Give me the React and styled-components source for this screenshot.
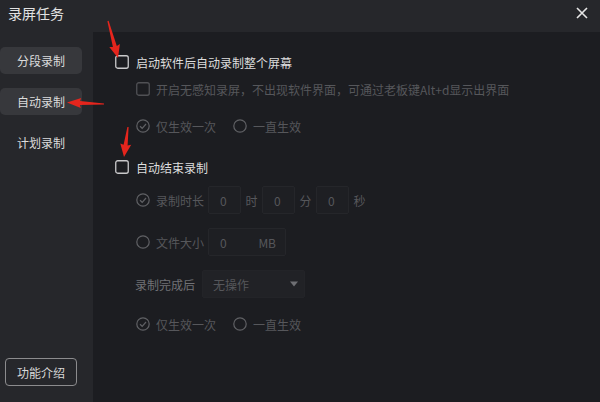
import React from "react";
import styled, { createGlobalStyle } from "styled-components";

const Global = createGlobalStyle`
  html, body { margin: 0; padding: 0; background: #26272b; }
  body { font-family: "Noto Sans CJK SC", "Noto Sans", sans-serif; }
  * { box-sizing: border-box; }
`;

const Window = styled.div`
  position: relative;
  width: 600px;
  height: 402px;
  background: #26272b;
  display: flex;
  flex-direction: column;
  overflow: hidden;
`;

const TitleBar = styled.div`
  height: 32px;
  flex: none;
  display: flex;
  align-items: center;
  justify-content: space-between;
  padding: 0 8px 6px 8px;
  color: #e2e2e2;
  font-size: 14px;
`;

const CloseBtn = styled.div`
  width: 14px;
  height: 14px;
  margin-right: 3px;
  display: flex;
  align-items: center;
  justify-content: center;
`;

const Body = styled.div`
  flex: 1;
  display: flex;
  min-height: 0;
`;

const Sidebar = styled.div`
  width: 93px;
  flex: none;
  display: flex;
  flex-direction: column;
  justify-content: space-between;
  padding: 15px 0 16px 0;
`;

const NavList = styled.div`
  display: flex;
  flex-direction: column;
  gap: 14px;
`;

const NavItem = styled.div`
  width: 82px;
  height: 27px;
  border-radius: 5px;
  background: ${(p) => (p.$active ? "#37383c" : "transparent")};
  color: #dcdcdc;
  font-size: 12px;
  display: flex;
  align-items: center;
  justify-content: center;
`;

const IntroButton = styled.div`
  margin-left: 5px;
  width: 72px;
  height: 28px;
  border: 1px solid #8c8c8e;
  border-radius: 4px;
  color: #d8d8d8;
  font-size: 12px;
  display: flex;
  align-items: center;
  justify-content: center;
`;

const Main = styled.div`
  flex: 1;
  background: #1c1d21;
  padding: 17px 0 0 22px;
  display: flex;
  flex-direction: column;
`;

const Row = styled.div`
  height: 26px;
  margin-top: ${(p) => p.$mt || 0}px;
  padding-left: ${(p) => (p.$indent ? 21 : 0)}px;
  display: flex;
  align-items: center;
  flex: none;
`;

const Label = styled.span`
  font-size: 12px;
  color: ${(p) => (p.$dim ? "#56575b" : p.$mid ? "#707175" : "#dedede")};
  white-space: nowrap;
  margin-left: ${(p) => p.$ml || 0}px;
`;

const Unit = styled.span`
  width: 21px;
  font-size: 12px;
  color: #56575b;
  text-align: center;
`;

const Field = styled.div`
  width: ${(p) => p.$w}px;
  height: 28px;
  margin-left: ${(p) => p.$ml || 0}px;
  background: #1e1f23;
  border: 1px solid #25262a;
  border-radius: 2px;
  display: flex;
  align-items: center;
  justify-content: space-between;
  padding: 0 9px 0 11px;
  font-size: 12px;
  color: #56575b;
`;

const Select = styled(Field)`
  background: #212226;
  border-color: #232428;
  padding: 0 6px 0 10px;
`;

const Option = styled.div`
  display: flex;
  align-items: center;
  margin-left: ${(p) => p.$ml || 0}px;
`;

const Overlay = styled.svg`
  position: absolute;
  left: 0;
  top: 0;
  pointer-events: none;
`;

const Box = ({ dim }) => (
  <svg width="14" height="14" viewBox="0 0 14 14">
    <rect x="0.75" y="0.75" width="12.5" height="12.5" rx="2" fill="none" stroke={dim ? "#505155" : "#c9c9cb"} strokeWidth="1.3" />
  </svg>
);

const CheckCircle = () => (
  <svg width="14" height="14" viewBox="0 0 14 14">
    <circle cx="7" cy="7" r="6.2" fill="none" stroke="#606165" strokeWidth="1.2" />
    <path d="M4 7.2 L6.2 9.3 L10 5" fill="none" stroke="#606165" strokeWidth="1.2" />
  </svg>
);

const Circle = () => (
  <svg width="14" height="14" viewBox="0 0 14 14">
    <circle cx="7" cy="7" r="6.2" fill="none" stroke="#606165" strokeWidth="1.2" />
  </svg>
);

function arrowPoints(tx, ty, px, py, headLen = 11, headW = 5.5, shaftStart = 0.6, shaftEnd = 2) {
  const dx = px - tx, dy = py - ty;
  const len = Math.hypot(dx, dy);
  const ux = dx / len, uy = dy / len;
  const nx = -uy, ny = ux;
  const bx = px - ux * headLen, by = py - uy * headLen;
  const pts = [
    [tx + nx * shaftStart, ty + ny * shaftStart],
    [bx + nx * shaftEnd - ux * 1, by + ny * shaftEnd - uy * 1],
    [bx + nx * headW - ux * 2, by + ny * headW - uy * 2],
    [px, py],
    [bx - nx * headW - ux * 2, by - ny * headW - uy * 2],
    [bx - nx * shaftEnd - ux * 1, by - ny * shaftEnd - uy * 1],
    [tx - nx * shaftStart, ty - ny * shaftStart],
  ];
  return pts.map((p) => p.map((v) => v.toFixed(1)).join(",")).join(" ");
}

export default function App() {
  return (
    <Window>
      <Global />
      <TitleBar>
        <span>录屏任务</span>
        <CloseBtn>
          <svg width="12" height="12" viewBox="0 0 12 12">
            <path d="M1 1 L11 11 M11 1 L1 11" stroke="#e6e6e6" strokeWidth="1.6" />
          </svg>
        </CloseBtn>
      </TitleBar>
      <Body>
        <Sidebar>
          <NavList>
            <NavItem $active>分段录制</NavItem>
            <NavItem $active>自动录制</NavItem>
            <NavItem>计划录制</NavItem>
          </NavList>
          <IntroButton>功能介绍</IntroButton>
        </Sidebar>
        <Main>
          <Row>
            <Box />
            <Label $ml={7}>启动软件后自动录制整个屏幕</Label>
          </Row>
          <Row $indent $mt={1}>
            <Box dim />
            <Label $dim $ml={6}>开启无感知录屏，不出现软件界面，可通过老板键Alt+d显示出界面</Label>
          </Row>
          <Row $indent $mt={11}>
            <Option>
              <CheckCircle />
              <Label $dim $ml={6}>仅生效一次</Label>
            </Option>
            <Option $ml={17}>
              <Circle />
              <Label $dim $ml={6}>一直生效</Label>
            </Option>
          </Row>
          <Row $mt={15}>
            <Box />
            <Label $ml={7}>自动结束录制</Label>
          </Row>
          <Row $indent $mt={7}>
            <CheckCircle />
            <Label $dim $ml={6}>录制时长</Label>
            <Field $w={33} $ml={4}>0</Field>
            <Unit>时</Unit>
            <Field $w={33}>0</Field>
            <Unit>分</Unit>
            <Field $w={33}>0</Field>
            <Unit>秒</Unit>
          </Row>
          <Row $indent $mt={16}>
            <Circle />
            <Label $dim $ml={6}>文件大小</Label>
            <Field $w={78} $ml={4}>
              <span>0</span>
              <span>MB</span>
            </Field>
          </Row>
          <Row $indent $mt={16}>
            <Label $mid $ml={-1}>录制完成后</Label>
            <Select $w={103} $ml={7}>
              <span>无操作</span>
              <svg width="8" height="6" viewBox="0 0 8 6">
                <path d="M0 0.5 L8 0.5 L4 5.5 Z" fill="#6e6f73" />
              </svg>
            </Select>
          </Row>
          <Row $indent $mt={14}>
            <Option>
              <CheckCircle />
              <Label $dim $ml={6}>仅生效一次</Label>
            </Option>
            <Option $ml={17}>
              <Circle />
              <Label $dim $ml={6}>一直生效</Label>
            </Option>
          </Row>
        </Main>
      </Body>
      <Overlay width="600" height="402" viewBox="0 0 600 402">
        <polygon points={arrowPoints(108, 21, 118, 58)} fill="#e5251d" />
        <polygon points={arrowPoints(104, 104, 67, 102.5, 12, 5, 0.6, 2)} fill="#e5251d" />
        <polygon points={arrowPoints(128, 127, 124, 157)} fill="#e5251d" />
      </Overlay>
    </Window>
  );
}
